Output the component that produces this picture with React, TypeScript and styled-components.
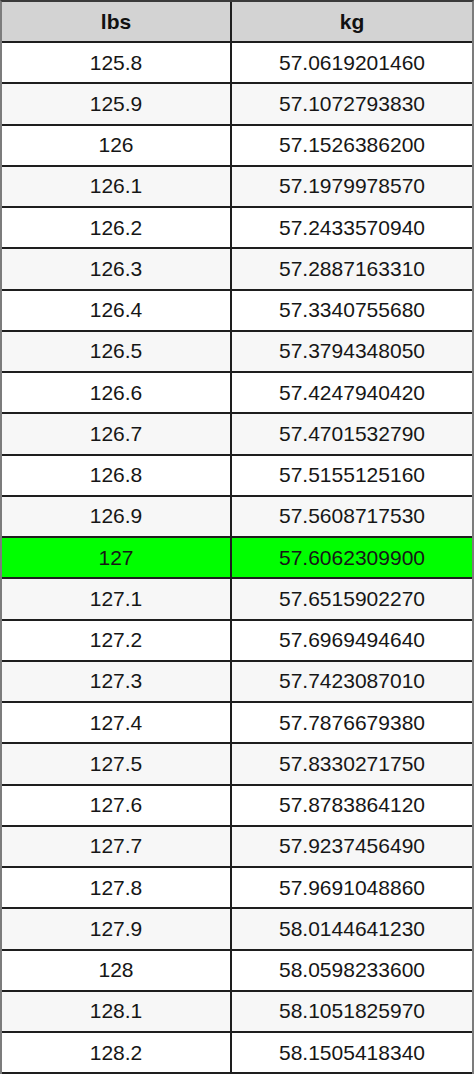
import React from "react";
import styled, { createGlobalStyle } from "styled-components";

const GlobalStyle = createGlobalStyle`
  html, body {
    margin: 0;
    padding: 0;
    background: #ffffff;
  }
  body {
    font-family: "Liberation Sans", Arial, sans-serif;
  }
`;

const rows: [string, string][] = [
  ["125.8", "57.0619201460"],
  ["125.9", "57.1072793830"],
  ["126", "57.1526386200"],
  ["126.1", "57.1979978570"],
  ["126.2", "57.2433570940"],
  ["126.3", "57.2887163310"],
  ["126.4", "57.3340755680"],
  ["126.5", "57.3794348050"],
  ["126.6", "57.4247940420"],
  ["126.7", "57.4701532790"],
  ["126.8", "57.5155125160"],
  ["126.9", "57.5608717530"],
  ["127", "57.6062309900"],
  ["127.1", "57.6515902270"],
  ["127.2", "57.6969494640"],
  ["127.3", "57.7423087010"],
  ["127.4", "57.7876679380"],
  ["127.5", "57.8330271750"],
  ["127.6", "57.8783864120"],
  ["127.7", "57.9237456490"],
  ["127.8", "57.9691048860"],
  ["127.9", "58.0144641230"],
  ["128", "58.0598233600"],
  ["128.1", "58.1051825970"],
  ["128.2", "58.1505418340"],
];

const HIGHLIGHT = "127";

const App: React.FC = () => {
  return (
    <>
      <GlobalStyle />
      <Table>
        <HeaderRow>
          <HeaderCell>lbs</HeaderCell>
          <HeaderCell>kg</HeaderCell>
        </HeaderRow>
        {rows.map(([lbs, kg], i) => {
          const tone = lbs === HIGHLIGHT ? "highlight" : i % 2 === 1 ? "alt" : "plain";
          return (
            <Row key={lbs}>
              <Cell $tone={tone}>{lbs}</Cell>
              <Cell $tone={tone}>{kg}</Cell>
            </Row>
          );
        })}
      </Table>
    </>
  );
};

export default App;

const Table = styled.div`
  width: 474px;
  box-sizing: border-box;
  border-left: 2px solid #7c7c7c;
  border-right: 2px solid #7c7c7c;
  border-top: 2px solid #3a3a3a;
  display: flex;
  flex-direction: column;
`;

const Row = styled.div`
  display: grid;
  grid-template-columns: 228px 240px;
  column-gap: 2px;
  height: 39.25px;
  background: #1e1e1e;
  border-bottom: 2px solid #1e1e1e;
`;

const HeaderRow = styled(Row)`
  height: 39px;
`;

const HeaderCell = styled.div`
  display: flex;
  align-items: center;
  justify-content: center;
  background: #d3d3d3;
  color: #111;
  font-size: 21px;
  font-weight: 700;
`;

const toneColors: Record<string, string> = {
  plain: "#ffffff",
  alt: "#f7f7f7",
  highlight: "#00ff00",
};

const Cell = styled.div<{ $tone: string }>`
  display: flex;
  align-items: center;
  justify-content: center;
  background: ${(p) => toneColors[p.$tone]};
  color: #161616;
  font-size: 21px;
`;
